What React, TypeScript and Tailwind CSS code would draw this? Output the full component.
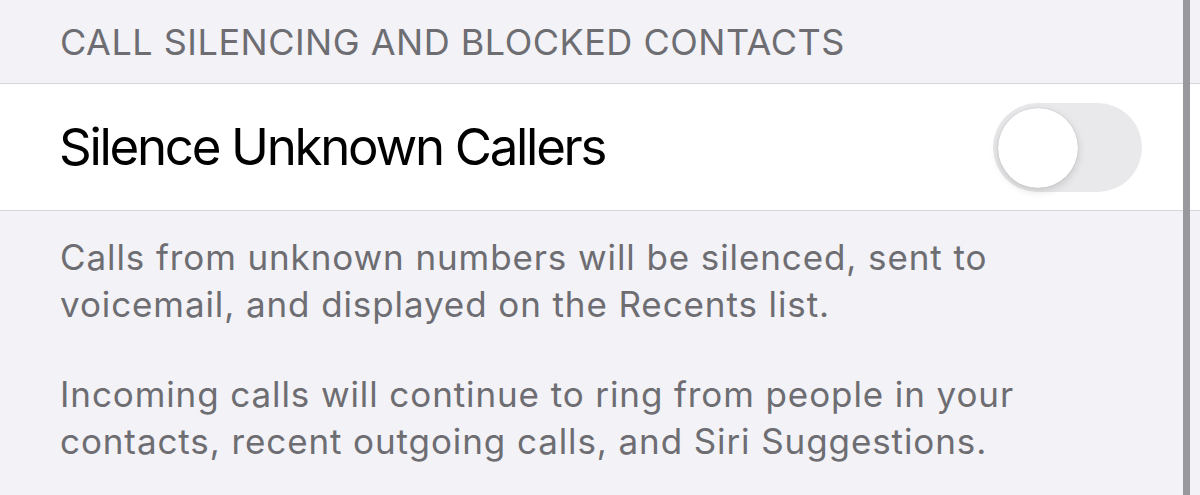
import React from "react";

export default function App() {
  return (
    <div
      className="relative w-[1200px] h-[495px] overflow-hidden bg-[#f2f2f7]"
      style={{ fontFamily: "Inter, 'Noto Sans', sans-serif" }}
    >
      <div className="h-[83px] pl-[60px] pt-[20px] text-[36px] leading-[44px] text-[#6d6d72] tracking-[0.5px]">
        CALL SILENCING AND BLOCKED CONTACTS
      </div>
      <div className="h-[128px] bg-white border-y border-[#d6d6da] flex items-center justify-between pl-[59px] pr-[58px]">
        <span className="text-[51px] leading-[62px] text-black tracking-[-2.3px]">Silence Unknown Callers</span>
        <div className="relative w-[149px] h-[89px] rounded-full bg-[#e9e9eb]">
          <div className="absolute left-[5px] top-[5px] w-[80px] h-[80px] rounded-full bg-white shadow-[0_3px_8px_rgba(0,0,0,0.15),0_0_1px_rgba(0,0,0,0.25)]" />
        </div>
      </div>
      <div className="pl-[60px] pt-[23px] text-[35px] leading-[47px] text-[#6d6d72] tracking-[0.9px] flex flex-col gap-[43px]">
        <p>
          Calls from unknown numbers will be silenced, sent to
          <br />
          voicemail, and displayed on the Recents list.
        </p>
        <p>
          Incoming calls will continue to ring from people in your
          <br />
          contacts, recent outgoing calls, and Siri Suggestions.
        </p>
      </div>
      <div className="absolute top-0 bottom-0 left-[1183px] w-[7px] bg-[#98989d]" />
    </div>
  );
}
